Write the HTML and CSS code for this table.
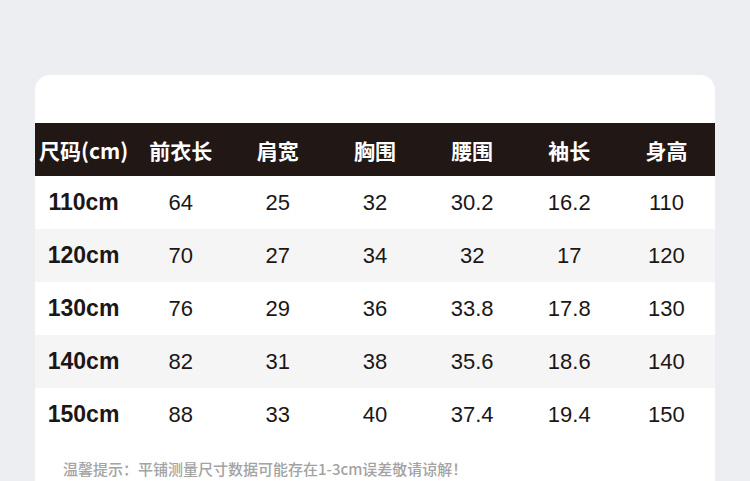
FILE: index.html
```html
<!DOCTYPE html>
<html lang="zh">
<head>
<meta charset="utf-8">
<link rel="stylesheet" href="styles.css">
</head>
<body>
<div class="card">
  <div class="row head">
    <div>尺码(cm)</div><div>前衣长</div><div>肩宽</div><div>胸围</div><div>腰围</div><div>袖长</div><div>身高</div>
  </div>
  <div class="row"><div class="size">110cm</div><div>64</div><div>25</div><div>32</div><div>30.2</div><div>16.2</div><div>110</div></div>
  <div class="row alt"><div class="size">120cm</div><div>70</div><div>27</div><div>34</div><div>32</div><div>17</div><div>120</div></div>
  <div class="row"><div class="size">130cm</div><div>76</div><div>29</div><div>36</div><div>33.8</div><div>17.8</div><div>130</div></div>
  <div class="row alt"><div class="size">140cm</div><div>82</div><div>31</div><div>38</div><div>35.6</div><div>18.6</div><div>140</div></div>
  <div class="row"><div class="size">150cm</div><div>88</div><div>33</div><div>40</div><div>37.4</div><div>19.4</div><div>150</div></div>
  <p class="note">温馨提示：平铺测量尺寸数据可能存在1-3cm误差敬请谅解！</p>
</div>
</body>
</html>
```
FILE: styles.css
```css
html, body {
  margin: 0;
  padding: 0;
  background: #edeef2;
  overflow: hidden;
}
body {
  height: 481px;
  padding-top: 75px;
  box-sizing: border-box;
}
.card {
  margin-left: 35px;
  width: 680px;
  background: #ffffff;
  border-radius: 15px 15px 0 0;
  padding-top: 48px;
  height: 406px;
  box-sizing: border-box;
  overflow: hidden;
}
.row {
  display: grid;
  grid-template-columns: repeat(7, 1fr);
  height: 53px;
  align-items: center;
  text-align: center;
  font-family: "Liberation Sans", Arial, sans-serif;
  font-size: 22px;
  color: #1c1716;
}
.row.alt {
  background: #f5f5f5;
}
.row.head {
  background: #211816;
  color: #ffffff;
  font-family: "Noto Sans CJK SC", "Noto Sans", sans-serif;
  font-weight: 700;
  font-size: 21px;
}
.row.head > div:first-child {
  white-space: nowrap;
}
.size {
  font-weight: 700;
  font-size: 23px;
}
.note {
  margin: 16px 0 0 28px;
  font-family: "Noto Sans CJK SC", sans-serif;
  font-size: 15px;
  font-weight: 500;
  color: #a3a3a3;
  line-height: 24px;
}
```
